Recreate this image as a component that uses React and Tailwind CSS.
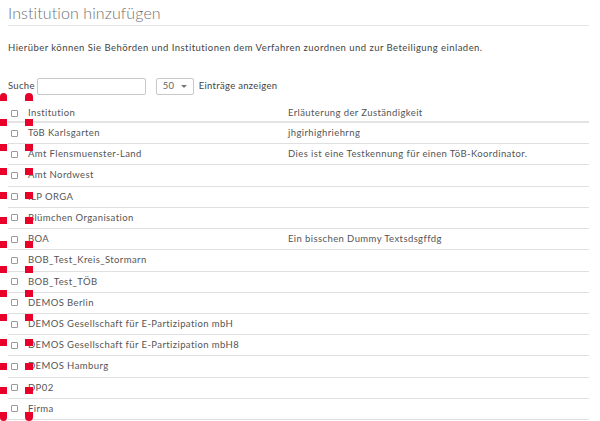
import React from "react";

const rows = [
  ["TöB Karlsgarten", "jhgirhighriehrng"],
  ["Amt Flensmuenster-Land", "Dies ist eine Testkennung für einen TöB-Koordinator."],
  ["Amt Nordwest", ""],
  ["ILP ORGA", ""],
  ["Blümchen Organisation", ""],
  ["BOA", "Ein bisschen Dummy Textsdsgffdg"],
  ["BOB_Test_Kreis_Stormarn", ""],
  ["BOB_Test_TÖB", ""],
  ["DEMOS Berlin", ""],
  ["DEMOS Gesellschaft für E-Partizipation mbH", ""],
  ["DEMOS Gesellschaft für E-Partizipation mbH8", ""],
  ["DEMOS Hamburg", ""],
  ["DP02", ""],
  ["Firma", ""],
];

const marks = [119, 144, 168, 192, 217, 241, 266, 290, 314, 339, 363, 387];

function Box() {
  return <span className="block w-[7px] h-[7px] border border-[#9a9a9a] rounded-[1px] bg-white" />;
}

export default function App() {
  return (
    <div className="relative w-[600px] h-[421px] overflow-hidden bg-white text-[#555] px-2" style={{ fontFamily: "Lato, 'Open Sans', sans-serif" }}>
      <h1 className="pt-[4px] pb-[3px] text-[16px] font-light text-[#707070] tracking-[0.1px] border-b border-[#e5e5e5] leading-[18px] mr-[3px]">
        Institution hinzufügen
      </h1>
      <p className="mt-[16px] text-[9.5px] tracking-[0.45px] text-[#444] leading-[12px]">
        Hierüber können Sie Behörden und Institutionen dem Verfahren zuordnen und zur Beteiligung einladen.
      </p>
      <div className="mt-[24px] flex items-center text-[9.5px] tracking-[0.3px] text-[#444]">
        <span>Suche</span>
        <span className="ml-[2px] w-[109px] h-[17px] border border-[#c8c8c8] rounded-[2px]" />
        <span className="ml-[10px] w-[38px] h-[17px] border border-[#c8c8c8] rounded-[2px] flex items-center pl-[6px] text-[#666]">
          50
          <span className="ml-[7px] w-0 h-0 border-x-[3px] border-x-transparent border-t-[3px] border-t-[#777]" />
        </span>
        <span className="ml-[5px]">Einträge anzeigen</span>
      </div>
      <div className="mt-[10px] mr-[3px] text-[9.5px] tracking-[0.4px] text-[#555]">
        <div className="flex items-center h-[18px] border-b-2 border-[#e3e3e3]">
          <span className="w-[20px] pl-[3px]"><Box /></span>
          <span className="w-[260px]">Institution</span>
          <span>Erläuterung der Zuständigkeit</span>
        </div>
        {rows.map(([name, desc]) => (
          <div key={name} className="flex items-center h-[21.23px] border-b border-[#e0e0e0]">
            <span className="w-[20px] pl-[3px]"><Box /></span>
            <span className="w-[260px]">{name}</span>
            <span>{desc}</span>
          </div>
        ))}
      </div>
      <div className="absolute top-[93px] left-0 w-[7px] h-[8px] rounded-t-full bg-[#e8002a]" />
      <div className="absolute top-[93px] left-[25px] w-[8px] h-[8px] rounded-t-full bg-[#e8002a]" />
      {marks.map((y) => (
        <React.Fragment key={y}>
          <div className="absolute left-0 w-[7px] h-[7px] bg-[#e8002a]" style={{ top: y }} />
          <div className="absolute left-[25px] w-[8px] h-[7px] bg-[#e8002a]" style={{ top: y }} />
        </React.Fragment>
      ))}
      <div className="absolute top-[412px] left-0 w-[7px] h-[9px] rounded-b-full bg-[#e8002a]" />
      <div className="absolute top-[412px] left-[25px] w-[8px] h-[9px] rounded-b-full bg-[#e8002a]" />
    </div>
  );
}
